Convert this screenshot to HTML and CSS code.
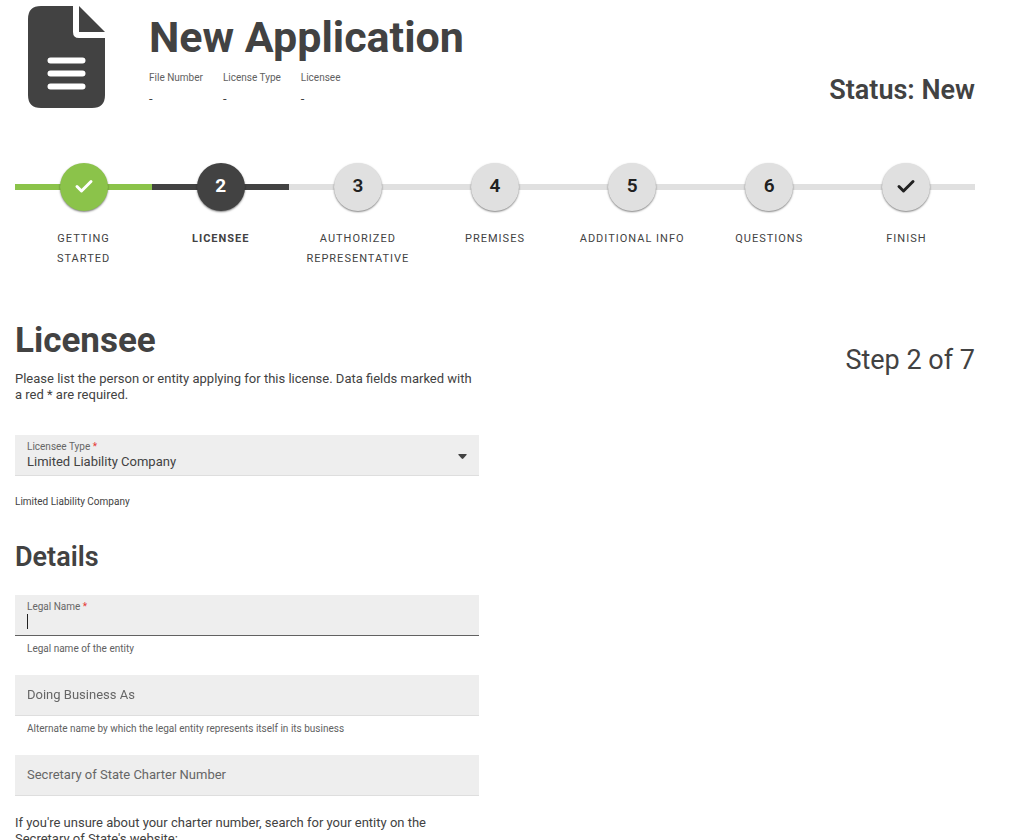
FILE: index.html
```
<!DOCTYPE html>
<html lang="en">
<head>
    <meta charset="UTF-8">
    <meta name="viewport" content="width=device-width, initial-scale=1.0">
    <title>New Application</title>
    <link rel="stylesheet" href="styles.css">
</head>
<body>

<div class="page">
    <header class="app-header">
        <svg class="file-icon" viewBox="0 0 77 102" aria-hidden="true">
            <path d="M13 0h32v26q0 6 6 6h26v57q0 13-13 13H13Q0 102 0 89V13Q0 0 13 0z"/>
            <path d="M51 0l26 26H51z"/>
            <path class="lines" d="M22.500 54.500h32M22.500 67.500h32M22.500 80.500h32"/>
        </svg>
        <div class="app-title">
            <h1>New Application</h1>
            <dl class="app-meta">
                <div>
                    <dt>File Number</dt>
                    <dd>-</dd>
                </div>
                <div>
                    <dt>License Type</dt>
                    <dd>-</dd>
                </div>
                <div>
                    <dt>Licensee</dt>
                    <dd>-</dd>
                </div>
            </dl>
        </div>
        <div class="status">Status: New</div>
    </header>

    <ol class="stepper">
        <li class="done">
            <span class="circle"><svg viewBox="0 0 24 24"><path d="M5 12.500l4.500 4.500L19 7.500"/></svg></span>
            <span class="step-label">Getting Started</span>
        </li>
        <li class="active" aria-current="step">
            <span class="circle">2</span>
            <span class="step-label">Licensee</span>
        </li>
        <li>
            <span class="circle">3</span>
            <span class="step-label">Authorized Representative</span>
        </li>
        <li>
            <span class="circle">4</span>
            <span class="step-label">Premises</span>
        </li>
        <li>
            <span class="circle">5</span>
            <span class="step-label">Additional Info</span>
        </li>
        <li>
            <span class="circle">6</span>
            <span class="step-label">Questions</span>
        </li>
        <li>
            <span class="circle"><svg viewBox="0 0 24 24"><path d="M5 12.500l4.500 4.500L19 7.500"/></svg></span>
            <span class="step-label">Finish</span>
        </li>
    </ol>

    <main class="content">
        <form class="licensee-form">
            <h2>Licensee</h2>
            <p class="intro">Please list the person or entity applying for this license. Data fields marked with a red * are required.</p>

            <div class="field filled">
                <label for="licensee-type">Licensee Type <span class="required">*</span></label>
                <select id="licensee-type" name="licensee-type" required>
                    <option>Limited Liability Company</option>
                    <option>Corporation</option>
                    <option>Individual</option>
                </select>
                <svg class="arrow" viewBox="0 0 9 5" aria-hidden="true"><path d="M1 0h7q1.300 0 .500 1L5.300 4.500q-.800 .800-1.600 0L.500 1Q-.300 0 1 0z"/></svg>
            </div>
            <p class="type-note">Limited Liability Company</p>

            <h3>Details</h3>

            <div class="field filled focused">
                <label for="legal-name">Legal Name <span class="required">*</span></label>
                <input type="text" id="legal-name" name="legal-name" required autofocus>
                <span class="caret"></span>
            </div>
            <p class="hint">Legal name of the entity</p>

            <div class="field">
                <label for="dba">Doing Business As</label>
                <input type="text" id="dba" name="dba">
            </div>
            <p class="hint">Alternate name by which the legal entity represents itself in its business</p>

            <div class="field">
                <label for="charter">Secretary of State Charter Number</label>
                <input type="text" id="charter" name="charter">
            </div>
            <p class="charter-note">If you're unsure about your charter number, search for your entity on the Secretary of State's website:</p>
        </form>

        <div class="step-count">Step 2 of 7</div>
    </main>
</div>

</body>
</html>
```

FILE: styles.css
```
* {
    box-sizing: border-box;
}

html {
    overflow-x: hidden;
    scrollbar-width: none;
}

body {
    margin: 0;
    font-family: Roboto, sans-serif;
    font-size: 13px;
    line-height: 16px;
    color: #424242;
    background-color: #fff;
}

h1, h2, h3, p, dl, dd, ol {
    margin: 0;
    padding: 0;
}

.page {
    max-width: 990px;
    padding: 6px 15px 0;
}

/* Header */
.app-header {
    display: flex;
    align-items: flex-start;
    padding-left: 13px;
}

.file-icon {
    width: 77px;
    height: 102px;
    margin-right: 44px;
    fill: #424242;
}

.file-icon .lines {
    fill: none;
    stroke: #fff;
    stroke-width: 6;
    stroke-linecap: round;
}

.app-title {
    flex: 1;
}

h1 {
    font-size: 43px;
    line-height: 62px;
    font-weight: bold;
}

.app-meta {
    display: flex;
    gap: 20px;
    padding-top: 2px;
    font-size: 10px;
}

.app-meta dt {
    color: #616161;
}

.app-meta dd {
    margin-top: 5px;
    font-size: 13px;
}

.status {
    align-self: flex-end;
    font-size: 27px;
    line-height: 36px;
    font-weight: 600;
}

/* Stepper */
.stepper {
    display: flex;
    margin-top: 55px;
    list-style: none;
}

.stepper li {
    flex: 1;
    display: flex;
    flex-direction: column;
    align-items: center;
    background: linear-gradient(#e0e0e0, #e0e0e0) 0 21px / 100% 6px no-repeat;
}

.stepper .done {
    background-image: linear-gradient(#8bc34a, #8bc34a);
}

.stepper .active {
    background-image: linear-gradient(#424242, #424242);
}

.circle {
    display: flex;
    align-items: center;
    justify-content: center;
    width: 48px;
    height: 48px;
    padding-bottom: 2px;
    border-radius: 50%;
    background-color: #e0e0e0;
    box-shadow: 0 1px 2px rgba(0, 0, 0, 0.5);
    color: #212121;
    font-size: 19px;
    font-weight: 600;
}

.circle svg {
    width: 24px;
    height: 24px;
    fill: none;
    stroke: #212121;
    stroke-width: 3;
    stroke-linecap: round;
    stroke-linejoin: round;
}

.done .circle {
    background-color: #8bc34a;
}

.done .circle svg {
    stroke: #fff;
}

.active .circle {
    background-color: #424242;
    color: #fff;
    font-weight: bold;
}

.step-label {
    max-width: 108px;
    margin-top: 18px;
    font-size: 11px;
    line-height: 20px;
    letter-spacing: 1px;
    text-align: center;
    text-transform: uppercase;
}

.active .step-label {
    font-weight: bold;
}

/* Form */
.content {
    display: grid;
    grid-template-columns: 1fr 1fr;
    gap: 32px;
    margin-top: 51px;
}

h2 {
    font-size: 35px;
    line-height: 42px;
}

h3 {
    margin-top: 27px;
    margin-bottom: 18px;
    font-size: 27px;
    line-height: 40px;
    font-weight: 600;
}

.intro {
    margin-top: 9px;
    margin-bottom: 32px;
}

.field {
    position: relative;
    display: flex;
    height: 41px;
    background-color: #eee;
    border-bottom: 1px solid #dedede;
}

.field label {
    position: absolute;
    left: 12px;
    top: 12px;
    color: #666;
    pointer-events: none;
}

.field.filled label {
    top: 4px;
    font-size: 10px;
}

.field.focused {
    border-bottom-color: #616161;
}

.required {
    color: #e53935;
}

.field input,
.field select {
    width: 100%;
    padding: 14px 12px 0;
    border: 0;
    outline: 0;
    background: none;
    appearance: none;
    font: inherit;
    color: #424242;
}

.field.focused input {
    caret-color: transparent;
}

.caret {
    position: absolute;
    left: 12px;
    top: 19px;
    width: 1px;
    height: 15px;
    background-color: #212121;
}

.arrow {
    position: absolute;
    right: 12px;
    top: 19px;
    width: 9px;
    height: 5px;
    fill: #424242;
}

.type-note {
    margin-top: 18px;
    font-size: 10px;
}

.hint {
    margin: 5px 12px 18px;
    font-size: 10px;
    color: #616161;
}

.charter-note {
    margin-top: 19px;
}

.step-count {
    margin-top: 22px;
    font-size: 27px;
    line-height: 36px;
    text-align: right;
}
```
